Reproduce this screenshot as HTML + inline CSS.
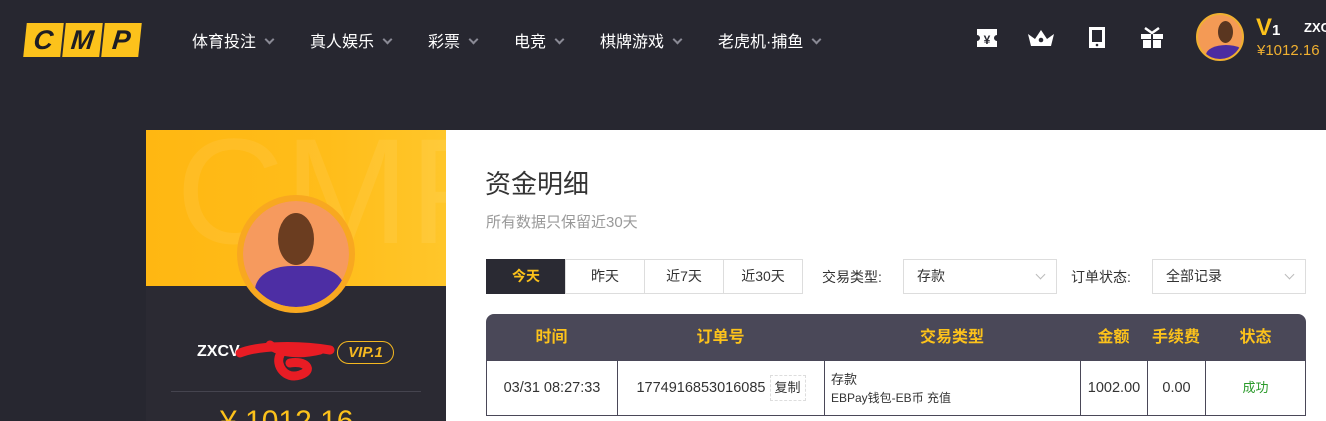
<!DOCTYPE html>
<html><head><meta charset="utf-8"><style>
*{margin:0;padding:0;box-sizing:border-box}
html,body{width:1326px;height:421px;overflow:hidden}
body{background:#272730;font-family:"Liberation Sans","Noto Sans CJK SC",sans-serif;position:relative}
.a{position:absolute}
.nav{color:#fff;font-size:16px;top:28px}
.nav span{position:absolute;top:0;white-space:nowrap}
.car{display:inline-block;width:7px;height:7px;border-right:2px solid #8a8a95;border-bottom:2px solid #8a8a95;transform:rotate(45deg);margin-left:10px;position:relative;top:-4px}
.logo div{position:absolute;top:23px;width:37px;height:34px;background:#fcc21b;transform:skewX(-6deg);color:#1d1d24;font:italic 900 27px "Liberation Sans",sans-serif;text-align:center;line-height:34px}
.btn{position:absolute;top:259px;height:35px;border:1px solid #ddd;font-size:14px;text-align:center;line-height:33px;color:#333;background:#fff}
.sel{position:absolute;top:259px;height:35px;border:1px solid #ddd;font-size:14px;line-height:33px;padding-left:13px;color:#333}
.sel i{position:absolute;right:12px;top:11px;width:7px;height:7px;border-right:1px solid #bbb;border-bottom:1px solid #bbb;transform:rotate(45deg)}
.lbl{position:absolute;top:267px;font-size:14px;color:#333}
.th{position:absolute;top:314px;height:47px;line-height:47px;color:#fcc21b;font-weight:bold;font-size:16px;text-align:center}
.td{position:absolute;top:361px;height:54px;border-right:1px solid #4a4858;font-size:14.5px;color:#333;text-align:center;line-height:54px}
</style></head><body>
<div class="logo"><div style="left:25px">C</div><div style="left:64px">M</div><div style="left:103px">P</div></div>
<div class="a nav" style="left:0;width:900px">
<span style="left:192px">体育投注<i class="car"></i></span>
<span style="left:310px">真人娱乐<i class="car"></i></span>
<span style="left:428px">彩票<i class="car"></i></span>
<span style="left:514px">电竞<i class="car"></i></span>
<span style="left:600px">棋牌游戏<i class="car"></i></span>
<span style="left:718px">老虎机·捕鱼<i class="car"></i></span>
</div>
<svg class="a" style="left:975px;top:26px" width="190" height="24" viewBox="0 0 190 24">
<path d="M2 3h20v6a3 3 0 0 0 0 6v6H2v-6a3 3 0 0 0 0-6z" fill="#fff"/><text x="12" y="18" font-size="12" text-anchor="middle" fill="#272730" font-weight="bold">¥</text>
<path d="M56 20l-3-12 7 5 6-9 6 9 7-5-3 12z" fill="#fff"/><circle cx="66" cy="14" r="2.3" fill="#272730"/>
<rect x="114" y="1" width="16" height="21" fill="#fff"/><rect x="117" y="4" width="10" height="12" fill="#272730"/><circle cx="122" cy="19" r="1.3" fill="#272730"/>
<rect x="166" y="8" width="22" height="5" fill="#fff"/><rect x="168" y="14" width="18" height="8" fill="#fff"/><rect x="176" y="6" width="2" height="17" fill="#272730"/><path d="M170 2l7 5 7-5" stroke="#fff" stroke-width="2.5" fill="none"/>
</svg>
<div class="a" style="left:1196px;top:13px;width:48px;height:48px;border-radius:50%;background:#f49a55;border:2px solid #f0b030;overflow:hidden"><div style="position:absolute;left:8px;top:30px;width:40px;height:20px;background:#4b2ca0;border-radius:50% 50% 0 0"></div><div style="position:absolute;left:20px;top:6px;width:15px;height:22px;background:#5a3620;border-radius:50%"></div></div>
<div class="a" style="left:1256px;top:14px;color:#fcc21b;font:bold 24px 'Liberation Sans',sans-serif">V<span style="font-size:15px;color:#fff">1</span></div>
<div class="a" style="left:1304px;top:20px;color:#fff;font:bold 13px 'Liberation Sans',sans-serif">ZXC</div>
<div class="a" style="left:1257px;top:42px;color:#f0b030;font-size:15px">¥1012.16</div>

<div class="a" style="left:146px;top:130px;width:300px;height:291px;background:#2b2a33"></div>
<div class="a" style="left:146px;top:130px;width:300px;height:156px;background:linear-gradient(90deg,#ffb712,#ffbd1a 60%,#ffc62a);overflow:hidden"><div style="position:absolute;left:30px;top:-25px;font:150px 'Liberation Sans',sans-serif;color:rgba(255,255,255,.07)">CMP</div></div>
<div class="a" style="left:237px;top:195px;width:118px;height:118px;border-radius:50%;background:#f8a32a;overflow:hidden;border:6px solid #f8a820"><div style="width:100%;height:100%;background:#f69a5e;position:relative;border-radius:50%;overflow:hidden"><div style="position:absolute;left:12px;top:65px;width:90px;height:60px;background:#4d2ea4;border-radius:40% 40% 0 0"></div><div style="position:absolute;left:35px;top:12px;width:36px;height:52px;background:#6b3d20;border-radius:50%"></div></div></div>
<div class="a" style="left:197px;top:343px;color:#fff;font:bold 16px 'Liberation Sans',sans-serif">ZXCV</div>
<svg class="a" style="left:230px;top:335px" width="110" height="50"><path d="M10 18c20-8 60-8 90-3M40 10c10 8 30 10 50 5M50 20c-5 10 5 25 20 20s5-15-10-12" stroke="#e81c24" stroke-width="9" fill="none" stroke-linecap="round"/></svg>
<div class="a" style="left:337px;top:341px;width:57px;height:23px;border:1px solid #f5b820;border-radius:12px;color:#f5b820;font:italic bold 15px 'Liberation Sans',sans-serif;text-align:center;line-height:21px">VIP.1</div>
<div class="a" style="left:171px;top:391px;width:250px;height:1px;background:#45444f"></div>
<div class="a" style="left:220px;top:405px;color:#fcc21b;font:30px 'Liberation Sans',sans-serif">¥ 1012.16</div>

<div class="a" style="left:446px;top:130px;width:880px;height:291px;background:#fff"></div>
<div class="a" style="left:485px;top:164px;font-size:26px;color:#333">资金明细</div>
<div class="a" style="left:486px;top:211px;font-size:15px;color:#999">所有数据只保留近30天</div>
<div class="btn" style="left:486px;width:80px;background:#2a2a33;border-color:#2a2a33;color:#fcc21b;font-weight:bold">今天</div>
<div class="btn" style="left:565px;width:80px">昨天</div>
<div class="btn" style="left:644px;width:80px">近7天</div>
<div class="btn" style="left:723px;width:80px">近30天</div>
<div class="lbl" style="left:822px">交易类型:</div>
<div class="sel" style="left:903px;width:154px">存款<i></i></div>
<div class="lbl" style="left:1071px">订单状态:</div>
<div class="sel" style="left:1152px;width:154px">全部记录<i></i></div>

<div class="a" style="left:486px;top:314px;width:820px;height:47px;background:#4a4858;border-radius:8px 8px 0 0"></div>
<div class="th" style="left:486px;width:131px">时间</div>
<div class="th" style="left:617px;width:207px">订单号</div>
<div class="th" style="left:824px;width:256px">交易类型</div>
<div class="th" style="left:1080px;width:67px">金额</div>
<div class="th" style="left:1147px;width:58px">手续费</div>
<div class="th" style="left:1205px;width:101px">状态</div>
<div class="a" style="left:486px;top:361px;width:820px;height:55px;border:1px solid #4a4858;border-top:none"></div>
<div class="td" style="left:487px;width:131px">03/31 08:27:33</div>
<div class="td" style="left:618px;width:207px">1774916853016085 <span style="display:inline-block;border:1px dashed #ddd;line-height:24px;padding:0 4px;font-size:13px;vertical-align:middle">复制</span></div>
<div class="td" style="left:825px;width:256px;text-align:left;padding-left:6px;line-height:18px;padding-top:10px"><div style="font-size:13px">存款</div><div style="font-size:12px">EBPay钱包-EB币 充值</div></div>
<div class="td" style="left:1081px;width:67px;line-height:54px">1002.00</div>
<div class="td" style="left:1148px;width:58px">0.00</div>
<div class="td" style="left:1206px;width:99px;border:none;color:#2a9a2a;font-size:13px">成功</div>
</body></html>
